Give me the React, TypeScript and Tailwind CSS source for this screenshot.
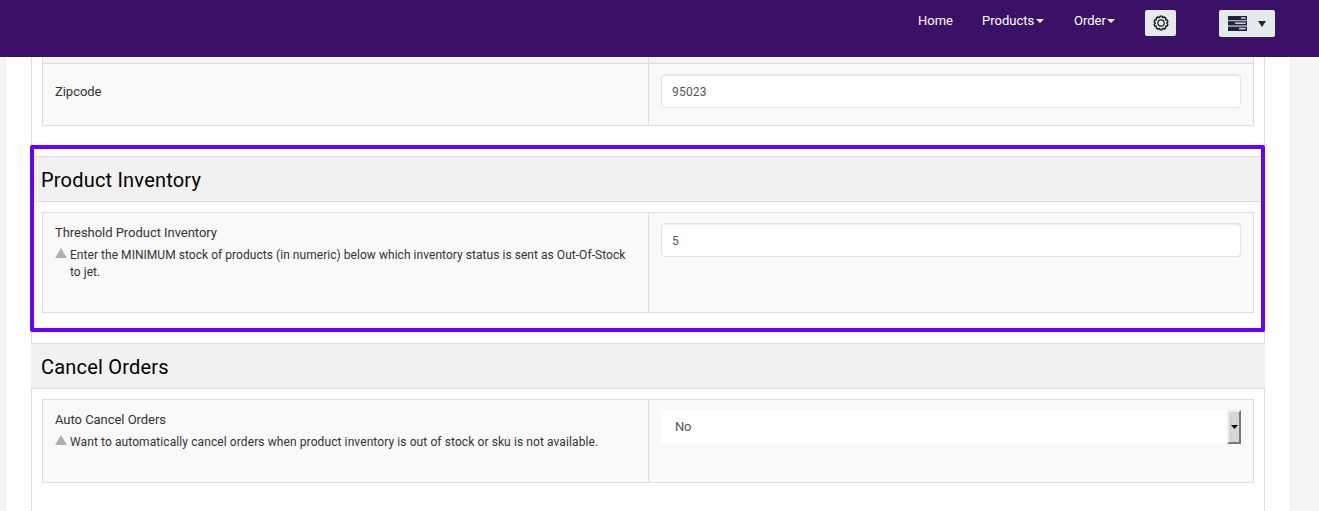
import type { ReactNode } from "react";

function Caret() {
  return (
    <svg width="8" height="4" viewBox="0 0 8 4" fill="currentColor">
      <path d="M0 0h8L4 4z" />
    </svg>
  );
}

function GearIcon() {
  const points: string[] = [];
  const teeth = 10;
  for (let i = 0; i < teeth; i++) {
    const base = (i / teeth) * Math.PI * 2 - Math.PI / 2;
    const spec: [number, number][] = [
      [-0.22, 5.9],
      [-0.13, 7],
      [0.13, 7],
      [0.22, 5.9],
    ];
    for (const [offset, radius] of spec) {
      points.push(
        `${(8 + Math.cos(base + offset) * radius).toFixed(2)},${(8 + Math.sin(base + offset) * radius).toFixed(2)}`,
      );
    }
  }
  return (
    <svg width="16" height="16" viewBox="0 0 16 16" fill="none" stroke="#15171c" strokeWidth="1.35" strokeLinejoin="round">
      <polygon points={points.join(" ")} />
      <circle cx="8" cy="8" r="3.2" strokeWidth="1.2" />
    </svg>
  );
}

function ServerIcon() {
  return (
    <svg width="19" height="15" viewBox="0 0 19 15">
      <g fill="#22233a">
        <rect width="19" height="4.3" />
        <rect y="5.2" width="19" height="4.3" />
        <rect y="10.6" width="19" height="4.4" />
      </g>
      <g fill="#c9ccd4">
        <rect x="13" y="1.2" width="4.6" height="1.6" />
        <rect x="7" y="6.4" width="10.6" height="1.6" />
        <rect x="11" y="11.8" width="6.6" height="1.6" />
      </g>
    </svg>
  );
}

function Navbar() {
  return (
    <header className="relative z-10 flex h-[57px] shrink-0 items-start bg-[#3b1067] pl-[918px] text-[13px] leading-5 text-white">
      <a className="mt-[11px] w-16">Home</a>
      <a className="mt-[11px] flex w-[92px] items-center gap-[2px]">
        Products
        <Caret />
      </a>
      <a className="mt-[11px] flex w-[71px] items-center gap-px">
        Order
        <Caret />
      </a>
      <button className="mt-[10px] flex h-[26px] w-[31px] items-center justify-center rounded-[2px] bg-[#e6eaed]">
        <GearIcon />
      </button>
      <button className="mt-[10px] ml-[43px] flex h-[27px] w-14 items-center rounded-[2px] bg-[#e6eaed] pl-[9px]">
        <ServerIcon />
        <svg className="ml-[11px]" width="8" height="6" viewBox="0 0 8 6" fill="#22233a">
          <path d="M0 0h8L4 6z" />
        </svg>
      </button>
    </header>
  );
}

function Heading({ children }: { children: ReactNode }) {
  return (
    <h2 className="-mx-px mt-[30px] h-[46px] border-y border-[#dddddd] bg-[#f1f1f1] pt-[11px] pl-[10px] text-[20px] leading-6 tracking-[0.2px] text-black">
      {children}
    </h2>
  );
}

function Row({
  label,
  hint,
  hintTracking = "",
  height,
  first,
  children,
}: {
  label: string;
  hint?: string;
  hintTracking?: string;
  height: string;
  first?: boolean;
  children: ReactNode;
}) {
  return (
    <div className={`mx-[10px] flex border border-[#dddddd] bg-[#f9f9f9] ${height} ${first ? "" : "mt-[10px]"}`}>
      <div className={`w-[605px] shrink-0 px-3 ${first ? "pt-[17px]" : "pt-[9px]"}`}>
        <div className="text-[13px] leading-[22px] tracking-[-0.04px] text-[#333333]">{label}</div>
        {hint && (
          <div className="mt-[2px] flex text-[12px] leading-[17px] text-[#333333]">
            <svg className="mt-[2px] mr-[3px] shrink-0" width="12" height="10" viewBox="0 0 12 10" fill="#b3afaf">
              <path d="M6 0l6 10H0z" />
            </svg>
            <p className={`pt-px ${hintTracking}`}>{hint}</p>
          </div>
        )}
      </div>
      <div className="flex-1 border-l border-[#dddddd] pt-[10px] pr-3 pl-3">{children}</div>
    </div>
  );
}

function Field({ value }: { value: string }) {
  return (
    <div className="flex h-[34px] items-center rounded border border-[#e3e3e3] bg-white pt-[2px] pl-[10px] text-[12px] tracking-[0.2px] text-[#555555] shadow-[inset_0_1px_1px_rgba(0,0,0,0.075)]">
      {value}
    </div>
  );
}

function SelectField({ value }: { value: string }) {
  return (
    <div className="flex h-[34px] items-center bg-white pl-[14px] text-[13px] text-[#555555]">
      <span className="flex-1 tracking-[-0.3px]">{value}</span>
      <span className="flex h-[34px] w-[14px] items-center justify-center border-2 border-t-[#f0f0f0] border-r-[#777777] border-b-[#777777] border-l-[#f0f0f0] bg-[#d5d5d5]">
        <svg className="shrink-0" width="7" height="4" viewBox="0 0 7 4" fill="#000000">
          <path d="M0 0h7L3.5 4z" />
        </svg>
      </span>
    </div>
  );
}

export default function App() {
  return (
    <div className="flex h-[511px] w-[1319px] flex-col overflow-hidden bg-[#f4f5f5] font-[Roboto,sans-serif]">
      <Navbar />
      <main className="ml-[6px] w-[1284px] flex-1 bg-white px-[25px] shadow-[0_0_3px_#e6eaee]">
        <div className="relative h-full border-x border-[#dddddd]">
          <div className="mx-[10px] h-[6px] border-x border-[#dddddd] bg-[#f2f2f2]">
            <div className="ml-[605px] h-full border-l border-[#dddddd]" />
          </div>
          <Row label="Zipcode" height="h-[63px]" first>
            <Field value="95023" />
          </Row>
          <Heading>Product Inventory</Heading>
          <Row
            label="Threshold Product Inventory"
            hint="Enter the MINIMUM stock of products (in numeric) below which inventory status is sent as Out-Of-Stock to jet."
            hintTracking="tracking-[0.045px]"
            height="h-[101px]"
          >
            <Field value="5" />
          </Row>
          <Heading>Cancel Orders</Heading>
          <Row
            label="Auto Cancel Orders"
            hint="Want to automatically cancel orders when product inventory is out of stock or sku is not available."
            hintTracking="tracking-[0.095px]"
            height="h-[84px]"
          >
            <SelectField value="No" />
          </Row>
          <div className="pointer-events-none absolute top-[88px] -right-px -left-[2px] h-[187px] rounded-[2px] border-4 border-[#6600ff]" />
        </div>
      </main>
    </div>
  );
}
